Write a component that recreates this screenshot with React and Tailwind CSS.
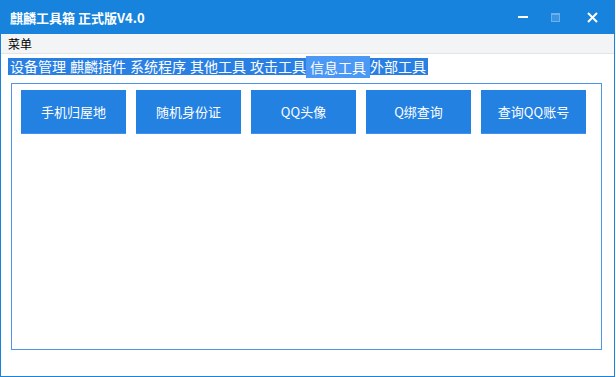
import { useState } from 'react';

const tabs = ['设备管理', '麒麟插件', '系统程序', '其他工具', '攻击工具', '信息工具', '外部工具'];
const tools = ['手机归屋地', '随机身份证', 'QQ头像', 'Q绑查询', '查询QQ账号'];

export default function App() {
  const [activeTab, setActiveTab] = useState('信息工具');

  return (
    <div
      className="w-[615px] h-[377px] bg-white border-l border-r border-b border-[#1783dc] flex flex-col overflow-hidden"
      style={{ fontFamily: '"Microsoft YaHei", "Noto Sans CJK SC", "Noto Sans", sans-serif' }}
    >
      {/* 标题栏 */}
      <header className="h-[34px] shrink-0 bg-[#1783dc] flex items-center justify-between pl-[9px]">
        <h1 className="text-[13px] font-bold text-white leading-none">麒麟工具箱 正式版V4.0</h1>
        <div className="flex items-center h-full">
          <div className="w-[34px] h-full flex items-center justify-center">
            <div className="w-[10px] h-[2px] bg-white" />
          </div>
          <div className="w-[30px] h-full flex items-center justify-center">
            <div className="w-[9px] h-[9px] bg-[#3a95e4] border border-[#6fb0ec] border-t-[2px]" />
          </div>
          <div className="w-[44px] h-full flex items-center justify-center">
            <svg width="11" height="11" viewBox="0 0 11 11">
              <path d="M1 1 L10 10 M10 1 L1 10" stroke="white" strokeWidth="2" />
            </svg>
          </div>
        </div>
      </header>

      {/* 菜单栏 */}
      <div className="h-[20px] shrink-0 bg-[#f2f4f6] border-b border-[#e2e4e6] flex items-center pl-[7px]">
        <span className="text-[12px] text-black leading-none">菜单</span>
      </div>

      {/* 选项卡 */}
      <nav className="mt-[1px] ml-[7px] flex items-center h-[22px]">
        <div className="flex bg-[#2a80e2] h-[17px]">
          {tabs.map((t) =>
            t === activeTab ? (
              <button
                key={t}
                onClick={() => setActiveTab(t)}
                className="relative z-10 -mx-[2px] -my-[2px] w-[64px] h-[22px] bg-[#4c98f5] text-white text-[14px] leading-none flex items-center justify-center"
              >
                {t}
              </button>
            ) : (
              <button
                key={t}
                onClick={() => setActiveTab(t)}
                className="w-[60px] h-[17px] text-white text-[14px] leading-none flex items-center justify-center"
              >
                {t}
              </button>
            )
          )}
        </div>
      </nav>

      {/* 内容区 */}
      <main className="mt-[6px] ml-[10px] w-[591px] h-[267px] border border-[#4d95ea] pt-[6px] pl-[9px]">
        <div className="flex gap-[10px]">
          {tools.map((t) => (
            <button
              key={t}
              className="w-[105px] h-[44px] bg-[#2381e2] border-b border-[#3f93ef] text-white text-[13px] flex items-center justify-center"
            >
              {t}
            </button>
          ))}
        </div>
      </main>
    </div>
  );
}
